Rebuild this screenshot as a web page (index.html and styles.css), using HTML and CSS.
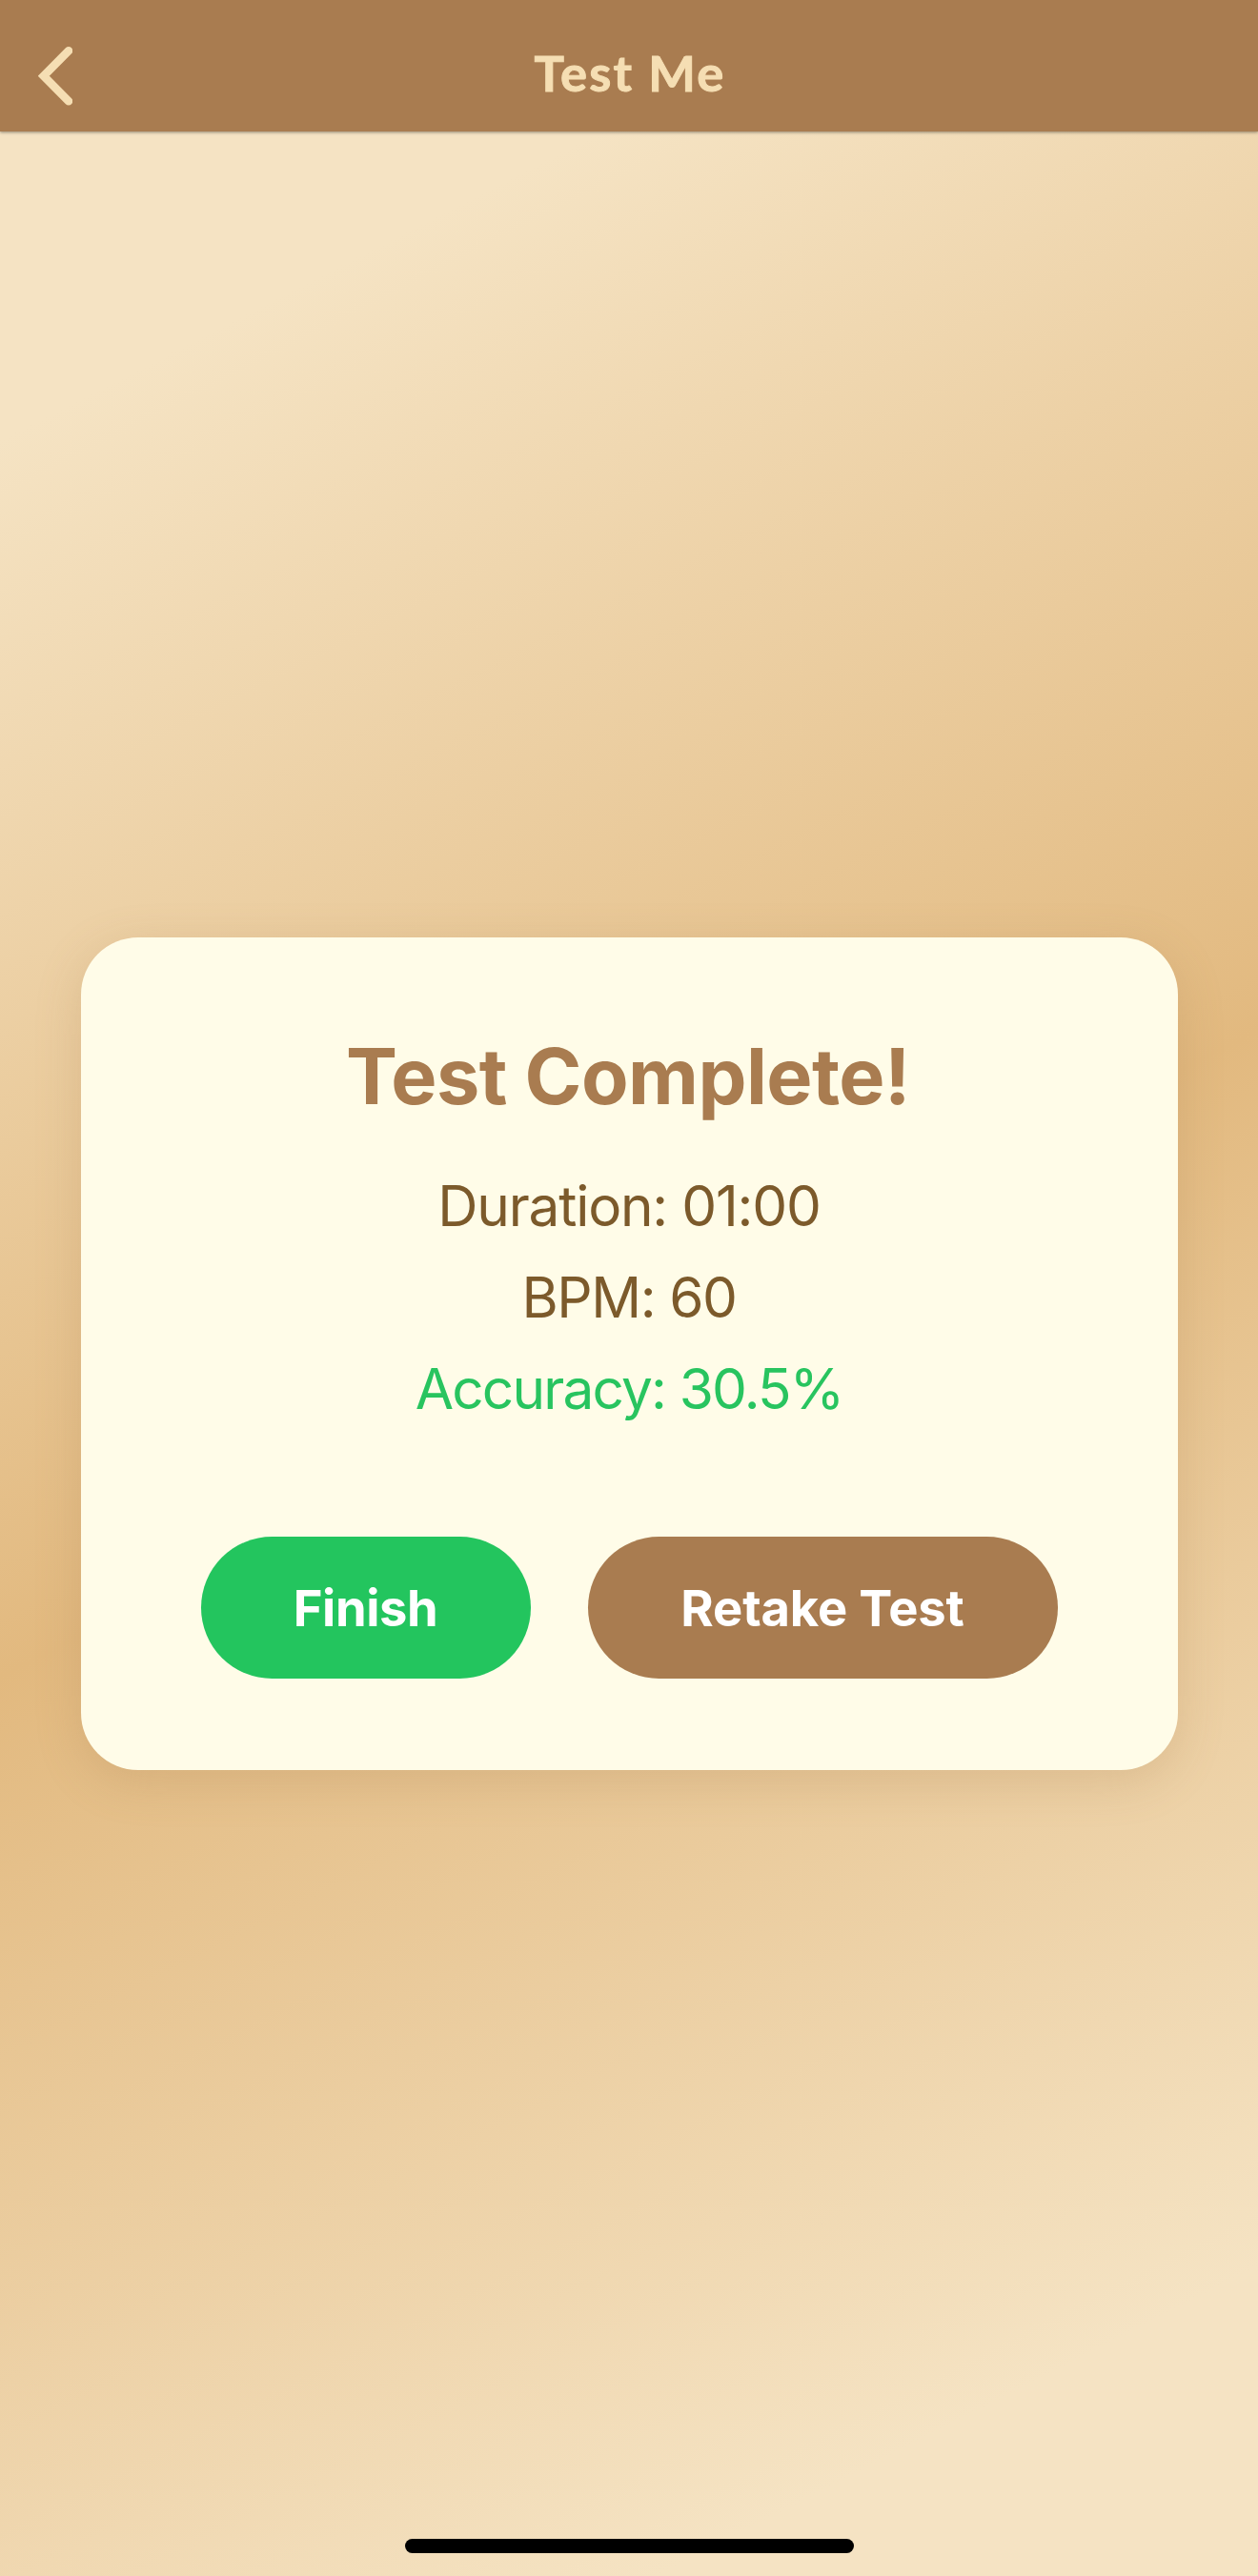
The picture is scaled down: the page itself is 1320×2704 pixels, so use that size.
FILE: index.html
```html
<!DOCTYPE html>
<html lang="en">
<head>
<meta charset="utf-8">
<title>Test Me</title>
<link rel="stylesheet" href="styles.css">
</head>
<body>
<div class="screen">
  <header class="header">
    <button class="back" aria-label="Back">
      <svg class="back-icon" viewBox="0 0 36 62" width="36" height="62"><path d="M32 4.3 5.8 30.8 32 57.2" fill="none" stroke="currentColor" stroke-width="8.6" stroke-linecap="round" stroke-linejoin="miter"/></svg>
    </button>
    <h1 class="header-title">Test Me</h1>
  </header>
  <main class="content">
    <section class="card">
      <h2 class="card-title">Test Complete!</h2>
      <p class="stat">Duration: 01:00</p>
      <p class="stat stat-bpm">BPM: 60</p>
      <p class="stat stat-good">Accuracy: 30.5%</p>
      <div class="actions">
        <button class="btn btn-finish">Finish</button>
        <button class="btn btn-retake">Retake Test</button>
      </div>
    </section>
  </main>
  <div class="home-indicator"></div>
</div>
</body>
</html>
```
FILE: styles.css
```css
* { box-sizing: border-box; }
body { margin: 0; font-family: Inter, "Liberation Sans", sans-serif; }
h1, h2, p { margin: 0; }
button { border: 0; padding: 0; font: inherit; }
.screen {
  display: flex;
  flex-direction: column;
  align-items: center;
  width: 1320px;
  height: 2704px;
  overflow: hidden;
}
.header {
  display: grid;
  grid-template-columns: 120px 1fr 120px;
  width: 100%;
  height: 138px;
  flex: none;
  background: #a97c50;
  box-shadow: 0 1px 3px rgba(0, 0, 0, .4);
  color: #f5deb3;
  z-index: 1;
}
.back { display: flex; padding: 49px 0 0 40px; background: none; color: inherit; }
.header-title {
  padding-top: 46px;
  font: 700 52.5px/60px Lato, sans-serif;
  letter-spacing: 2.2px;
  text-indent: 2px;
  text-align: center;
  -webkit-text-stroke: 1px #f5deb3;
}
.content {
  display: flex;
  justify-content: center;
  align-items: center;
  flex: none;
  width: 100%;
  height: 2566px;
  background: linear-gradient(152.8deg, #f5e3c3 10%, #e2b97f 50%, #f5e3c3 90%);
}
.card {
  display: flex;
  flex-direction: column;
  align-items: center;
  width: 1151px;
  height: 874px;
  padding-top: 96px;
  border-radius: 60px;
  background: #fffce8;
  box-shadow: 0 12px 48px rgba(169, 124, 80, .24);
  white-space: nowrap;
}
.card-title {
  color: #a97c50;
  font-size: 81px;
  font-weight: 700;
  line-height: 101px;
  height: 138px;
  padding-right: 2px;
  letter-spacing: -.55px;
}
.stat {
  height: 96px;
  color: #7c5a2b;
  font-size: 58.5px;
  font-weight: 400;
  line-height: 96px;
  letter-spacing: -1.2px;
}
.stat-bpm { letter-spacing: -1.4px; }
.stat-good { color: #28c45f; letter-spacing: -1.8px; }
.actions { display: flex; gap: 60px; margin-top: 107px; }
.btn {
  height: 149px;
  border-radius: 75px;
  color: #fff;
  font-size: 52.5px;
  font-weight: 700;
  letter-spacing: -.4px;
}
.btn-finish { width: 346px; background: #23c55e; }
.btn-retake { width: 493px; background: #a97c50; letter-spacing: -.15px; }
.home-indicator {
  flex: none;
  width: 471px;
  height: 15px;
  margin-top: -39px;
  border-radius: 8px;
  background: #000;
}
```
